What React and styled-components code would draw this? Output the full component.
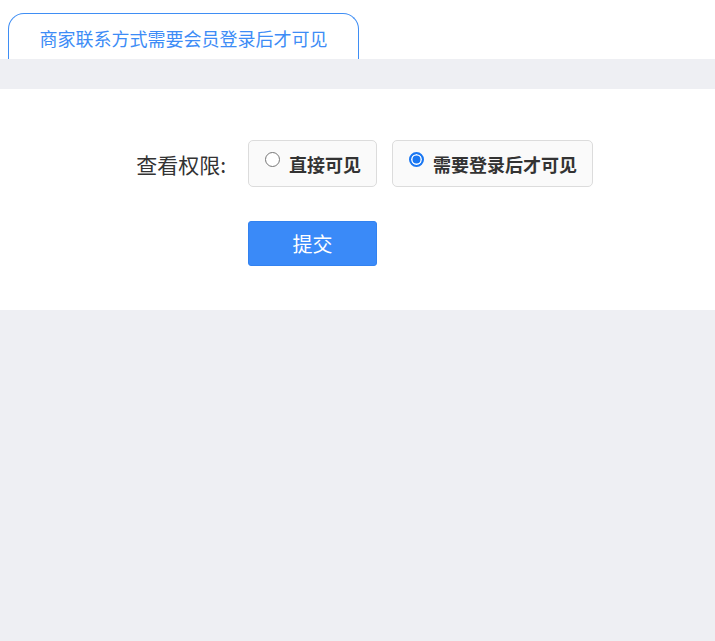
import React, { useState } from "react";
import styled, { createGlobalStyle } from "styled-components";

const Global = createGlobalStyle`
  html, body { margin: 0; padding: 0; }
  body {
    background: #eeeff3;
    font-family: "Noto Sans CJK SC", "Noto Sans", sans-serif;
    color: #333;
  }
`;

const Page = styled.div`
  min-height: 641px;
  background: #eeeff3;
`;

const Header = styled.div`
  background: #fff;
  padding: 13px 0 0 8px;
  display: flex;
`;

const Tab = styled.div`
  box-sizing: border-box;
  width: 351px;
  height: 46px;
  border: 1px solid #3f8ef4;
  border-bottom: none;
  border-radius: 16px 16px 0 0;
  display: flex;
  align-items: center;
  justify-content: center;
  font-size: 18px;
  color: #3d8cf6;
  padding-top: 2px;
`;

const Panel = styled.div`
  margin-top: 30px;
  background: #fff;
  padding: 51px 0 44px;
  display: flex;
  flex-direction: column;
  gap: 34px;
`;

const Row = styled.div`
  display: flex;
  align-items: center;
`;

const Label = styled.div`
  box-sizing: border-box;
  width: 248px;
  padding-right: 22px;
  text-align: right;
  font-size: 21px;
  color: #333;
`;

const Options = styled.div`
  display: flex;
  gap: 15px;
`;

const Option = styled.label`
  box-sizing: border-box;
  height: 47px;
  display: flex;
  align-items: center;
  padding: 1px 15px 0 16px;
  border: 1px solid #dcdcdc;
  border-radius: 5px;
  background: #fafafa;
  cursor: pointer;
`;

const Radio = styled.input`
  appearance: none;
  -webkit-appearance: none;
  box-sizing: border-box;
  width: 15px;
  height: 15px;
  margin: 0 9px 9px 0;
  border-radius: 50%;
  border: 1.5px solid #767676;
  background: #fff;
  flex: none;
  cursor: pointer;

  &:checked {
    border: 2px solid #1a77f2;
    background: #1a77f2;
    box-shadow: inset 0 0 0 1.5px #fff;
  }
`;

const OptionText = styled.span`
  font-size: 18px;
  font-weight: 700;
  color: #333;
`;

const Submit = styled.button`
  margin-left: 248px;
  width: 129px;
  height: 45px;
  background: #3a8af8;
  border: 1px solid #3282f0;
  border-radius: 3px;
  color: #fff;
  font-size: 20px;
  font-family: inherit;
  cursor: pointer;
`;

export default function App() {
  const [v, setV] = useState("login");
  return (
    <Page>
      <Global />
      <Header>
        <Tab>商家联系方式需要会员登录后才可见</Tab>
      </Header>
      <Panel>
        <Row>
          <Label>查看权限:</Label>
          <Options>
            <Option>
              <Radio type="radio" name="perm" checked={v === "direct"} onChange={() => setV("direct")} />
              <OptionText>直接可见</OptionText>
            </Option>
            <Option>
              <Radio type="radio" name="perm" checked={v === "login"} onChange={() => setV("login")} />
              <OptionText>需要登录后才可见</OptionText>
            </Option>
          </Options>
        </Row>
        <Submit type="button">提交</Submit>
      </Panel>
    </Page>
  );
}
